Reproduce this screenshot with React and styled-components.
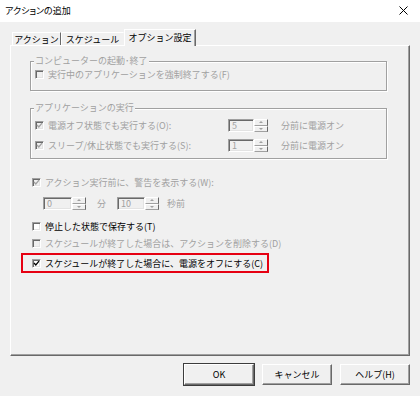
import React from 'react';
import styled, { createGlobalStyle } from 'styled-components';

const Global = createGlobalStyle`
  html, body { margin: 0; padding: 0; background: #f0f0f0; }
  body {
    font-family: "Noto Sans CJK JP", "Noto Sans", sans-serif;
    font-size: 9px;
    color: #000;
  }
  * { box-sizing: border-box; }
`;

const Window = styled.div`
  width: 420px;
  height: 396px;
  background: #f0f0f0;
  display: flex;
  flex-direction: column;
  overflow: hidden;
`;

const TitleBar = styled.div`
  height: 22px;
  background: #fff;
  display: flex;
  align-items: center;
  justify-content: space-between;
  padding: 0 12px 1px 5px;
`;

const Title = styled.span`
  font-size: 9px;
  line-height: 11px;
  font-feature-settings: "palt";
`;

const CloseIcon = styled.svg`
  width: 9px;
  height: 9px;
  display: block;
`;

const Body = styled.div`
  padding: 0 10px;
  display: flex;
  flex-direction: column;
`;

const TabStrip = styled.div`
  height: 23px;
  display: flex;
  align-items: flex-end;
  padding-left: 2px;
  position: relative;
  z-index: 1;
`;

const Tab = styled.div`
  width: ${p => p.$w}px;
  height: ${p => (p.$active ? 17 : 13)}px;
  margin-bottom: ${p => (p.$active ? -1 : 0)}px;
  background: #f0f0f0;
  border-top: 1px solid #fff;
  border-left: 1px solid #fff;
  border-right: 1px solid ${p => (p.$hideRight ? 'transparent' : '#696969')};
  box-shadow: ${p => (p.$active ? 'inset -1px 0 0 #a0a0a0' : 'none')};
  display: flex;
  align-items: center;
  justify-content: center;
  padding-bottom: ${p => (p.$active ? 2 : 0)}px;
  line-height: 11px;
  white-space: nowrap;
`;

const Panel = styled.div`
  width: 400px;
  height: 311px;
  border-top: 1px solid #fff;
  border-left: 1px solid #fff;
  border-right: 1px solid #696969;
  border-bottom: 1px solid #696969;
  box-shadow: inset -1px -1px 0 #a0a0a0;
  display: flex;
  flex-direction: column;
  padding: 0 22px 0 0;
`;

const Group = styled.div`
  position: relative;
  margin: ${p => p.$top}px 0 0 19px;
  border: 1px solid #a0a0a0;
  box-shadow: inset 1px 1px 0 #fff, 1px 1px 0 #fff;
  padding: ${p => p.$pad};
  display: flex;
  flex-direction: column;
  gap: 7px;
`;

const GroupLabel = styled.span`
  position: absolute;
  top: -7px;
  left: 3px;
  padding: 0 1px;
  background: #f0f0f0;
  color: #a0a0a0;
  line-height: 11px;
  white-space: nowrap;
`;

const CheckRow = styled.label`
  display: flex;
  align-items: center;
  height: 13px;
  gap: 4px;
  color: ${p => (p.$disabled ? '#a0a0a0' : '#000')};
  white-space: nowrap;
  line-height: 11px;
  margin: ${p => p.$m || '0'};
`;

const Box = styled.span`
  width: 9px;
  height: 9px;
  flex: none;
  border-top: 1px solid #a0a0a0;
  border-left: 1px solid #a0a0a0;
  border-right: 1px solid #fff;
  border-bottom: 1px solid #fff;
  box-shadow: inset 1px 1px 0 #696969, inset -1px -1px 0 #e3e3e3;
  background: ${p => (p.$disabled ? '#f0f0f0' : '#fff')};
  display: flex;
  align-items: center;
  justify-content: center;
`;

const Check = ({ checked, disabled }) => (
  <Box $disabled={disabled}>
    {checked && (
      <svg width="7" height="7" viewBox="0 0 7 7">
        <polyline
          points="1,3 2.8,5 6,1.2"
          fill="none"
          stroke={disabled ? '#a0a0a0' : '#000'}
          strokeWidth="1.3"
        />
      </svg>
    )}
  </Box>
);

const SpinGridRow = styled.div`
  display: grid;
  grid-template-columns: 180px auto auto;
  justify-content: start;
  column-gap: 13px;
  align-items: center;
  height: 13px;
`;

const Spin = styled.div`
  display: flex;
  height: 13px;
`;

const SpinField = styled.div`
  width: ${p => p.$w}px;
  height: 13px;
  border-top: 1px solid #a0a0a0;
  border-left: 1px solid #a0a0a0;
  border-right: 1px solid #fff;
  border-bottom: 1px solid #fff;
  box-shadow: inset 1px 1px 0 #696969, inset -1px -1px 0 #e3e3e3;
  color: #a0a0a0;
  padding-left: 3px;
  line-height: 11px;
`;

const SpinButtons = styled.div`
  width: 14px;
  display: flex;
  flex-direction: column;
`;

const SpinBtn = styled.div`
  flex: 1;
  border-top: 1px solid #fff;
  border-left: 1px solid #fff;
  border-right: 1px solid #696969;
  border-bottom: 1px solid #a0a0a0;
  display: flex;
  align-items: center;
  justify-content: center;
`;

const Arrow = styled.span`
  width: 0;
  height: 0;
  border-left: 2px solid transparent;
  border-right: 2px solid transparent;
  ${p => (p.$down ? 'border-top' : 'border-bottom')}: 2px solid #a0a0a0;
`;

const Spinner = ({ value, w }) => (
  <Spin>
    <SpinField $w={w}>{value}</SpinField>
    <SpinButtons>
      <SpinBtn><Arrow /></SpinBtn>
      <SpinBtn><Arrow $down /></SpinBtn>
    </SpinButtons>
  </Spin>
);

const Muted = styled.span`
  color: #a0a0a0;
  line-height: 11px;
  white-space: nowrap;
`;

const TimeRow = styled.div`
  display: flex;
  align-items: center;
  height: 13px;
  margin: 8px 0 0 32px;
`;

const TimeLabel = styled(Muted)`
  margin: 0 ${p => p.$r}px 0 ${p => p.$l}px;
`;

const Highlight = styled.div`
  width: 248px;
  height: 20px;
  margin: 3px 0 0 10px;
  border: 2px solid #e60012;
  display: flex;
  align-items: center;
  padding-left: 9px;
`;

const ButtonRow = styled.div`
  display: flex;
  justify-content: flex-end;
  gap: 8px;
  margin-top: 8px;
`;

const Button = styled.button`
  width: 70px;
  height: 21px;
  font: inherit;
  font-size: 9px;
  color: #000;
  background: #f0f0f0;
  border-top: 1px solid #fff;
  border-left: 1px solid #fff;
  border-right: 1px solid #696969;
  border-bottom: 1px solid #696969;
  box-shadow: inset -1px -1px 0 #a0a0a0${p => (p.$default ? ', 0 0 0 1px #3c3c3c' : '')};
  padding: 0;
  line-height: 11px;
`;

export default function App() {
  return (
    <>
      <Global />
      <Window>
        <TitleBar>
          <Title>アクションの追加</Title>
          <CloseIcon viewBox="0 0 9 9">
            <path d="M0.5 0.5 L8.5 8.5 M8.5 0.5 L0.5 8.5" stroke="#000" strokeWidth="1" fill="none" />
          </CloseIcon>
        </TitleBar>
        <Body>
          <TabStrip>
            <Tab $w={49}>アクション</Tab>
            <Tab $w={63} $hideRight>スケジュール</Tab>
            <Tab $w={72} $active>オプション設定</Tab>
          </TabStrip>
          <Panel>
            <Group $top={15} $pad="6px 0 9px 4px">
              <GroupLabel>コンピューターの起動･終了</GroupLabel>
              <CheckRow $disabled>
                <Check disabled />
                実行中のアプリケーションを強制終了する(F)
              </CheckRow>
            </Group>
            <Group $top={17} $pad="10px 0 6px 4px">
              <GroupLabel>アプリケーションの実行</GroupLabel>
              <SpinGridRow>
                <CheckRow $disabled>
                  <Check checked disabled />
                  電源オフ状態でも実行する(O):
                </CheckRow>
                <Spinner value="5" w={26} />
                <Muted>分前に電源オン</Muted>
              </SpinGridRow>
              <SpinGridRow>
                <CheckRow $disabled>
                  <Check checked disabled />
                  スリープ/休止状態でも実行する(S):
                </CheckRow>
                <Spinner value="1" w={26} />
                <Muted>分前に電源オン</Muted>
              </SpinGridRow>
            </Group>
            <CheckRow $disabled $m="17px 0 0 21px">
              <Check checked disabled />
              アクション実行前に、警告を表示する(W):
            </CheckRow>
            <TimeRow>
              <Spinner value="0" w={29} />
              <TimeLabel $l={11} $r={11}>分</TimeLabel>
              <Spinner value="10" w={28} />
              <TimeLabel $l={8} $r={0}>秒前</TimeLabel>
            </TimeRow>
            <CheckRow $m="10px 0 0 21px">
              <Check />
              停止した状態で保存する(T)
            </CheckRow>
            <CheckRow $disabled $m="4px 0 0 21px">
              <Check disabled />
              スケジュールが終了した場合は、アクションを削除する(D)
            </CheckRow>
            <Highlight>
              <CheckRow>
                <Check checked />
                スケジュールが終了した場合に、電源をオフにする(C)
              </CheckRow>
            </Highlight>
          </Panel>
          <ButtonRow>
            <Button $default>OK</Button>
            <Button>キャンセル</Button>
            <Button>ヘルプ(H)</Button>
          </ButtonRow>
        </Body>
      </Window>
    </>
  );
}
